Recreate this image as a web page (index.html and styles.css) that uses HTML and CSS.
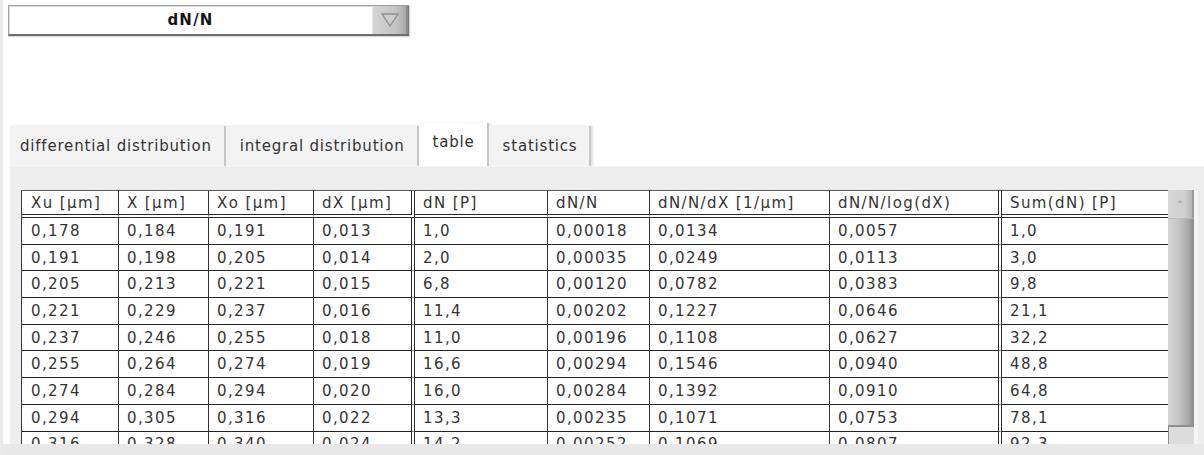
FILE: index.html
```html
<!DOCTYPE html>
<html>
<head>
<meta charset="utf-8">
<link rel="stylesheet" href="styles.css">
</head>
<body>
<div class="page">
  <div class="dropdown">
    <div class="dd-field">dN/N</div>
    <div class="dd-btn">
      <svg width="20" height="16" viewBox="0 0 20 16"><polygon points="2,2 18,2 10,14" fill="#cdcdcd" stroke="#8e8e8e" stroke-width="1.3"/></svg>
    </div>
  </div>
  <div class="tabbar">
    <div class="tab first">differential distribution</div>
    <div class="tab">integral distribution</div>
    <div class="tab active">table</div>
    <div class="tab">statistics</div>
  </div>
  <div class="panel">
    <div class="grid-wrap">
      <table class="data">
        <thead>
          <tr>
            <th class="c1">Xu [µm]</th><th class="c2">X [µm]</th><th class="c3">Xo [µm]</th><th class="c4 dbl">dX [µm]</th><th class="c5">dN [P]</th><th class="c6">dN/N</th><th class="c7">dN/N/dX [1/µm]</th><th class="c8 dbl">dN/N/log(dX)</th><th class="c9 last">Sum(dN) [P]</th>
          </tr>
        </thead>
        <tbody>
          <tr><td>0,178</td><td>0,184</td><td>0,191</td><td class="dbl">0,013</td><td>1,0</td><td>0,00018</td><td>0,0134</td><td class="dbl">0,0057</td><td class="last">1,0</td></tr>
          <tr><td>0,191</td><td>0,198</td><td>0,205</td><td class="dbl">0,014</td><td>2,0</td><td>0,00035</td><td>0,0249</td><td class="dbl">0,0113</td><td class="last">3,0</td></tr>
          <tr><td>0,205</td><td>0,213</td><td>0,221</td><td class="dbl">0,015</td><td>6,8</td><td>0,00120</td><td>0,0782</td><td class="dbl">0,0383</td><td class="last">9,8</td></tr>
          <tr><td>0,221</td><td>0,229</td><td>0,237</td><td class="dbl">0,016</td><td>11,4</td><td>0,00202</td><td>0,1227</td><td class="dbl">0,0646</td><td class="last">21,1</td></tr>
          <tr><td>0,237</td><td>0,246</td><td>0,255</td><td class="dbl">0,018</td><td>11,0</td><td>0,00196</td><td>0,1108</td><td class="dbl">0,0627</td><td class="last">32,2</td></tr>
          <tr><td>0,255</td><td>0,264</td><td>0,274</td><td class="dbl">0,019</td><td>16,6</td><td>0,00294</td><td>0,1546</td><td class="dbl">0,0940</td><td class="last">48,8</td></tr>
          <tr><td>0,274</td><td>0,284</td><td>0,294</td><td class="dbl">0,020</td><td>16,0</td><td>0,00284</td><td>0,1392</td><td class="dbl">0,0910</td><td class="last">64,8</td></tr>
          <tr><td>0,294</td><td>0,305</td><td>0,316</td><td class="dbl">0,022</td><td>13,3</td><td>0,00235</td><td>0,1071</td><td class="dbl">0,0753</td><td class="last">78,1</td></tr>
          <tr><td>0,316</td><td>0,328</td><td>0,340</td><td class="dbl">0,024</td><td>14,2</td><td>0,00252</td><td>0,1069</td><td class="dbl">0,0807</td><td class="last">92,3</td></tr>
        </tbody>
      </table>
      <div class="scrollbar">
        <div class="sb-btn"><span class="sb-arrow"></span></div>
        <div class="sb-thumb"></div>
        <div class="sb-track"></div>
      </div>
    </div>
  </div>
  <div class="bottom"></div>
</div>
</body>
</html>
```

FILE: styles.css
```css
html, body {
  margin: 0;
  padding: 0;
  background: #ffffff;
}

body {
  width: 1204px;
  height: 455px;
  overflow: hidden;
  font-family: "DejaVu Sans", Verdana, sans-serif;
  color: #303030;
}

.page {
  height: 455px;
  border-left: 3px solid #e9e9e9;
  display: flex;
  flex-direction: column;
}

/* dropdown */
.dropdown {
  margin: 5px 0 0 5px;
  width: 401px;
  height: 31px;
  box-sizing: border-box;
  display: flex;
  background: #fff;
  border: 1px solid #a4a4a4;
  border-top-color: #9c9c9c;
  border-bottom: 2px solid #6e6e6e;
  border-right: 1px solid #7a7a7a;
  box-shadow: inset 1px 1px 0 #dcdcdc, 1px 1px 1px rgba(0, 0, 0, 0.15);
}

.dd-field {
  flex: 1;
  display: flex;
  align-items: center;
  justify-content: center;
  font-size: 15px;
  font-weight: bold;
  letter-spacing: 1.2px;
  color: #151515;
}

.dd-btn {
  width: 33px;
  display: flex;
  align-items: center;
  justify-content: center;
  background: linear-gradient(to right, #d4d4d4, #c4c4c4 70%, #a8a8a8);
  border-left: 1px solid #e6e6e6;
  border-right: 2px solid #8a8a8a;
}

/* tabs */
.tabbar {
  display: flex;
  align-items: flex-end;
  height: 43px;
  margin: 87px 0 0 7px;
}

.tab {
  height: 40px;
  display: flex;
  align-items: center;
  padding: 0 12px 0 14px;
  background: #f3f3f3;
  border-right: 2px solid #c6c6c6;
  box-shadow: 2px 0 2px rgba(0, 0, 0, 0.12);
  font-size: 15px;
  letter-spacing: 0.8px;
  color: #333;
}

.tab.first {
  padding-left: 10px;
}

.tab.active {
  height: 43px;
  padding-bottom: 6px;
  box-sizing: border-box;
  background: #ffffff;
}

/* panel */
.panel {
  margin-left: 7px;
  height: 278px;
  box-sizing: border-box;
  padding: 23px 0 0 11px;
  background: #ededed;
  border-top: 1px solid #f4f4f4;
  overflow: hidden;
}

.grid-wrap {
  display: flex;
  align-items: flex-start;
}

table.data {
  table-layout: fixed;
  width: 1147px;
  border-collapse: separate;
  border-spacing: 0;
  background: #ffffff;
  border-left: 1px solid #3a3a3a;
  border-top: 1px solid #5a5a5a;
  font-size: 15px;
  letter-spacing: 1.4px;
  color: #343434;
}

table.data th,
table.data td {
  box-sizing: border-box;
  padding: 0 0 0 8px;
  text-align: left;
  font-weight: normal;
  white-space: nowrap;
  overflow: hidden;
  border-right: 1px solid #333;
  border-bottom: 1px solid #222;
}

table.data th {
  height: 27px;
  border-bottom: 4px double #2a2a2a;
  padding-top: 1px;
}

table.data td {
  height: 26.7px;
}

table.data tr > :first-child {
  padding-left: 9px;
}

table.data .dbl {
  border-right: 4px double #2a2a2a;
}

table.data .last {
  border-right: 0;
}

.c1 { width: 97px; }
.c2 { width: 90px; }
.c3 { width: 105px; }
.c4 { width: 101px; }
.c5 { width: 133px; }
.c6 { width: 102px; }
.c7 { width: 180px; }
.c8 { width: 172px; }
.c9 { width: 166px; }

/* scrollbar */
.scrollbar {
  width: 26px;
  height: 260px;
  display: flex;
  flex-direction: column;
  border-right: 4px solid #f5f5f5;
}

.sb-btn {
  height: 29px;
  box-sizing: border-box;
  background: linear-gradient(to right, #d8d8d8, #cfcfcf 70%, #b5b5b5);
  border-right: 2px solid #9a9a9a;
  border-bottom: 1px solid #bcbcbc;
  display: flex;
  justify-content: center;
  padding-top: 10px;
}

.sb-arrow {
  width: 0;
  height: 0;
  border-left: 3px solid transparent;
  border-right: 3px solid transparent;
  border-bottom: 3px solid #b0b0b0;
}

.sb-thumb {
  height: 208px;
  background: linear-gradient(to right, #d6d6d6, #c6c6c6 40%, #a6a6a6 80%, #8a8a8a);
  border-bottom: 2px solid #8e8e8e;
  box-sizing: border-box;
}

.sb-track {
  flex: 1;
  background: #dcdcdc;
  border-left: 1px solid #8a8a8a;
}

.bottom {
  flex: 1;
  background: #e8e8e8;
}
```
